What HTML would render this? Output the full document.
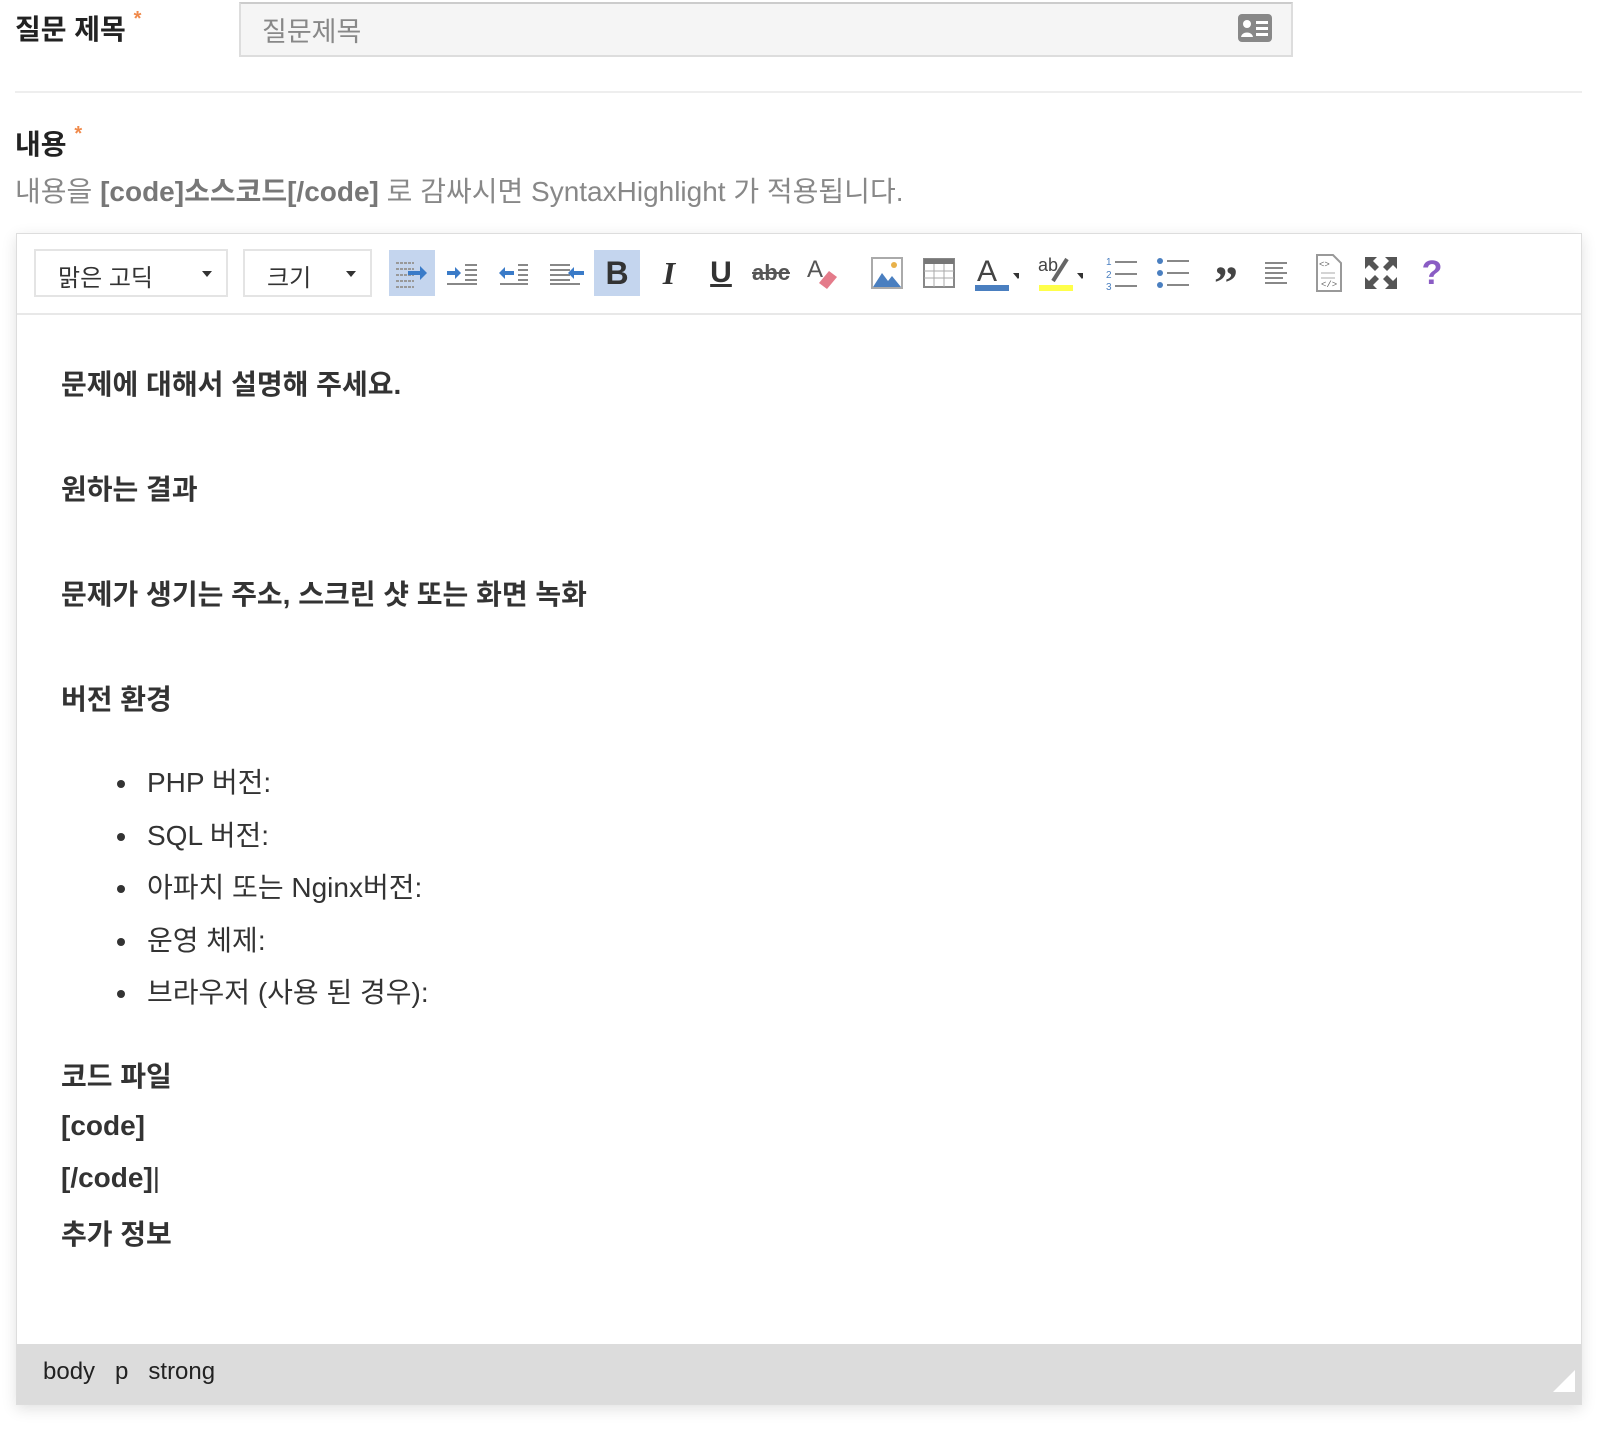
<!DOCTYPE html>
<html><head><meta charset="utf-8"><style>
*{margin:0;padding:0;box-sizing:border-box}
body{width:1600px;height:1433px;background:#fff;font-family:"Liberation Sans","Noto Sans CJK KR",sans-serif;color:#333;position:relative;overflow:hidden}
.a{position:absolute;white-space:nowrap}
.lbl{font-size:28px;font-weight:bold;color:#222}
.star{color:#f08a4b;font-size:20px;vertical-align:top}
.input{left:239px;top:2px;width:1054px;height:55px;background:#f5f5f5;border:2px solid #ddd;border-top-color:#ccc}
.help{font-size:28px;color:#888}
.editor{left:16px;top:233px;width:1566px;height:1172px;border:1px solid #ddd;background:#fff;box-shadow:0 4px 14px rgba(0,0,0,.12)}
.sel{position:absolute;top:15px;height:48px;border:2px solid #e4e4e4;font-size:24px;color:#333;padding:7px 22px}
.sel:after{content:"";position:absolute;right:14px;top:20px;border:5px solid transparent;border-top:6px solid #333}
.ic{position:absolute;top:16px;width:46px;height:46px;display:flex;align-items:center;justify-content:center}
.hl{background:#c4d5ee}
.ct{font-size:28px;font-weight:bold;color:#333}
.li{font-size:28px;color:#333}
.dot{position:absolute;width:8px;height:8px;border-radius:50%;background:#333}
.status{left:0;bottom:0;width:100%;height:60px;background:#dcdcdc;font-size:24px;color:#222}
</style></head><body>
<div class="a lbl" style="left:15px;top:8px">질문 제목 <span class="star">*</span></div>
<div class="a input"></div>
<div class="a" style="left:262px;top:10px;font-size:27px;color:#888">질문제목</div>
<svg class="a" style="left:1237px;top:13px" width="36" height="30" viewBox="0 0 36 30"><rect x="1" y="1" width="34" height="28" rx="4" fill="#888"/><circle cx="10" cy="11" r="4" fill="#fff"/><path d="M4 24c1-6 11-6 12 0z" fill="#fff"/><rect x="19" y="8" width="12" height="3" fill="#fff"/><rect x="19" y="14" width="12" height="3" fill="#fff"/><rect x="19" y="20" width="12" height="3" fill="#fff"/></svg>
<div class="a" style="left:15px;top:91px;width:1567px;height:2px;background:#eee"></div>
<div class="a lbl" style="left:15px;top:123px">내용 <span class="star">*</span></div>
<div class="a help" style="left:15px;top:170px">내용을 <b style="color:#777">[code]소스코드[/code]</b> 로 감싸시면 SyntaxHighlight 가 적용됩니다.</div>

<div class="a editor">
 <div class="sel" style="left:17px;width:194px">맑은 고딕</div>
 <div class="sel" style="left:226px;width:129px">크기</div>
 <div class="ic hl" style="left:372px"><svg width="40" height="40"><g stroke="#999" stroke-width="2"><path d="M4 10h18M4 16h18M4 22h18M4 28h18M4 34h18" stroke-dasharray="3 1"/></g><path d="M16 20h16" stroke="#3a7bc8" stroke-width="4"/><path d="M28 13l7 7-7 7z" fill="#3a7bc8"/></svg></div>
 <div class="ic" style="left:423px"><svg width="40" height="40"><path d="M4 20h10" stroke="#3a7bc8" stroke-width="4"/><path d="M12 14l6 6-6 6z" fill="#3a7bc8"/><path d="M22 12h12M22 17h12M22 22h12M22 27h12M4 31h30" stroke="#888" stroke-width="2"/></svg></div>
 <div class="ic" style="left:474px"><svg width="40" height="40"><path d="M10 20h10" stroke="#3a7bc8" stroke-width="4"/><path d="M11 14l-6 6 6 6z" fill="#3a7bc8"/><path d="M24 12h10M24 17h10M24 22h10M24 27h10M6 31h28" stroke="#888" stroke-width="2"/></svg></div>
 <div class="ic" style="left:526px"><svg width="40" height="40"><path d="M4 12h20M4 17h20M4 22h20M4 27h20M4 31h30" stroke="#888" stroke-width="2"/><path d="M26 20h12" stroke="#3a7bc8" stroke-width="4"/><path d="M28 14l-6 6 6 6z" fill="#3a7bc8"/></svg></div>
 <div class="ic hl" style="left:577px;font:bold 32px 'Liberation Sans';color:#333">B</div>
 <div class="ic" style="left:629px;font:italic bold 32px 'Liberation Serif';color:#333">I</div>
 <div class="ic" style="left:681px;font:bold 30px 'Liberation Sans';color:#333;text-decoration:underline">U</div>
 <div class="ic" style="left:731px;font:bold 22px 'Liberation Sans';color:#555;text-decoration:line-through">abc</div>
 <div class="ic" style="left:783px"><svg width="40" height="40"><text x="4" y="24" font-family="Liberation Sans" font-size="24" fill="#555">A</text><path d="M16 30l10-12 8 6-10 12z" fill="#e47b8a"/></svg></div>
 <div class="ic" style="left:847px"><svg width="36" height="36"><rect x="3" y="3" width="30" height="30" fill="#fff" stroke="#aaa" stroke-width="2"/><path d="M4 32l9-14 6 8 4-5 9 11z" fill="#4a7fc0"/><circle cx="25" cy="10" r="3" fill="#e8b14a"/></svg></div>
 <div class="ic" style="left:899px"><svg width="36" height="36"><rect x="3" y="4" width="30" height="28" fill="#fff" stroke="#888" stroke-width="2"/><rect x="3" y="4" width="30" height="5" fill="#777"/><path d="M3 16h30M3 23h30M13 9v23M23 9v23" stroke="#aaa"/></svg></div>
 <div class="ic" style="left:956px"><svg width="50" height="40"><text x="4" y="28" font-family="Liberation Sans" font-size="30" fill="#444">A</text><rect x="2" y="32" width="34" height="6" fill="#4a7fc0"/><path d="M40 20h10l-5 6z" fill="#333"/></svg></div>
 <div class="ic" style="left:1020px"><svg width="50" height="40"><text x="1" y="18" font-family="Liberation Sans" font-size="18" fill="#444">ab</text><path d="M16 28l14-22" stroke="#666" stroke-width="4"/><rect x="2" y="32" width="34" height="6" fill="#ffff4a"/><path d="M40 20h10l-5 6z" fill="#333"/></svg></div>
 <div class="ic" style="left:1083px"><svg width="40" height="40"><g fill="#4a7fc0" font-size="10" font-family="Liberation Sans"><text x="3" y="12">1</text><text x="3" y="25">2</text><text x="3" y="37">3</text></g><path d="M12 9h22M12 21h22M12 33h22" stroke="#888" stroke-width="2"/></svg></div>
 <div class="ic" style="left:1134px"><svg width="40" height="40"><g fill="#4a7fc0"><circle cx="6" cy="8" r="3"/><circle cx="6" cy="20" r="3"/><circle cx="6" cy="32" r="3"/></g><path d="M13 8h22M13 20h22M13 32h22" stroke="#888" stroke-width="2"/></svg></div>
 <div class="ic" style="left:1186px;font:bold 48px 'Liberation Serif';color:#444;padding-top:20px">”</div>
 <div class="ic" style="left:1237px"><svg width="36" height="36"><path d="M6 8h22M6 13h18M6 18h22M6 23h18M6 28h22" stroke="#888" stroke-width="2"/></svg></div>
 <div class="ic" style="left:1289px"><svg width="36" height="40"><path d="M6 2h16l8 8v28H6z" fill="#fff" stroke="#999" stroke-width="2"/><text x="8" y="14" font-size="9" fill="#666" font-family="Liberation Mono">&lt;&gt;</text><text x="10" y="34" font-size="9" fill="#666" font-family="Liberation Mono">&lt;/&gt;</text><path d="M10 20h14M10 25h14" stroke="#aaa"/></svg></div>
 <div class="ic" style="left:1341px"><svg width="36" height="36"><g fill="#555"><path d="M2 2h12l-4 4 6 6-4 4-6-6-4 4z"/><path d="M34 2v12l-4-4-6 6-4-4 6-6-4-4z"/><path d="M2 34v-12l4 4 6-6 4 4-6 6 4 4z"/><path d="M34 34h-12l4-4-6-6 4-4 6 6 4-4z"/></g></svg></div>
 <div class="ic" style="left:1392px;font:bold 34px 'Liberation Sans';color:#8a5cc4">?</div>
 <div class="a" style="left:0;top:79px;width:100%;height:2px;background:#e8e8e8"></div>

 <div class="a ct" style="left:44px;top:129px">문제에 대해서 설명해 주세요.</div>
 <div class="a ct" style="left:44px;top:234px">원하는 결과</div>
 <div class="a ct" style="left:44px;top:339px">문제가 생기는 주소, 스크린 샷 또는 화면 녹화</div>
 <div class="a ct" style="left:44px;top:444px">버전 환경</div>
 <div class="dot" style="left:100px;top:546px"></div><div class="a li" style="left:130px;top:527px">PHP 버전:</div>
 <div class="dot" style="left:100px;top:599px"></div><div class="a li" style="left:130px;top:580px">SQL 버전:</div>
 <div class="dot" style="left:100px;top:651px"></div><div class="a li" style="left:130px;top:632px">아파치 또는 Nginx버전:</div>
 <div class="dot" style="left:100px;top:704px"></div><div class="a li" style="left:130px;top:685px">운영 체제:</div>
 <div class="dot" style="left:100px;top:756px"></div><div class="a li" style="left:130px;top:737px">브라우저 (사용 된 경우):</div>
 <div class="a ct" style="left:44px;top:821px">코드 파일</div>
 <div class="a ct" style="left:44px;top:876px">[code]</div>
 <div class="a ct" style="left:44px;top:928px">[/code]<span style="font-weight:normal">|</span></div>
 <div class="a ct" style="left:44px;top:979px">추가 정보</div>

 <div class="a status"><span style="position:absolute;left:26px;top:14px">body &nbsp; p &nbsp; strong</span>
 <svg style="position:absolute;right:6px;bottom:12px" width="22" height="22"><path d="M22 0v22H0z" fill="#fff"/></svg></div>
</div>
</body></html>
